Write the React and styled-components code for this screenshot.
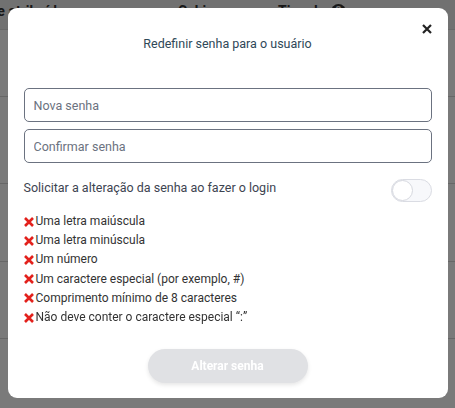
import React from 'react'
import styled, { createGlobalStyle } from 'styled-components'

const GlobalStyle = createGlobalStyle`
  * { box-sizing: border-box; }
  html, body { margin: 0; padding: 0; }
  body {
    font-family: Roboto, "Liberation Sans", sans-serif;
    background: #ffffff;
    width: 455px;
    height: 408px;
    overflow: hidden;
  }
`

const Page = styled.div`
  width: 455px;
  height: 408px;
  background: #ffffff;
`

const TableHead = styled.div`
  height: 30px;
  background: #ececec;
  display: flex;
  align-items: flex-start;
  padding-top: 2px;
  border-bottom: 1px solid #dcdcdc;
  font-size: 14px;
  line-height: 18px;
  font-weight: 700;
  color: #333;
  white-space: nowrap;
  overflow: hidden;
`

const HeadCell = styled.div`
  width: ${p => p.$w}px;
  flex-shrink: 0;
  display: flex;
  align-items: center;
  gap: 6px;
  margin-left: ${p => p.$ml || 0}px;
`

const SortMark = styled.span`
  font-size: 9px;
`

const HelpMark = styled.span`
  width: 15px;
  height: 15px;
  border-radius: 50%;
  background: #333;
  color: #ececec;
  font-size: 11px;
  display: inline-flex;
  align-items: center;
  justify-content: center;
`

const TableRow = styled.div`
  height: ${p => p.$h}px;
  border-bottom: 1px solid #d8d8d8;
`

const Overlay = styled.div`
  position: fixed;
  inset: 0;
  background: rgba(0, 0, 0, 0.52);
  display: flex;
  align-items: flex-start;
  justify-content: center;
  padding-top: 8px;
`

const Modal = styled.div`
  position: relative;
  width: 440px;
  height: 390px;
  background: #ffffff;
  border-radius: 9px;
  padding: 0 16px;
  display: flex;
  flex-direction: column;
`

const CloseButton = styled.button`
  position: absolute;
  top: 11px;
  right: 11px;
  width: 20px;
  height: 20px;
  border: none;
  background: none;
  padding: 0;
  display: flex;
  align-items: center;
  justify-content: center;
  cursor: pointer;
`

const Title = styled.h2`
  margin: 28px 0 0;
  font-size: 12.5px;
  line-height: 16px;
  font-weight: 400;
  color: #2f4858;
  text-align: center;
`

const Fields = styled.div`
  margin-top: 36px;
  display: flex;
  flex-direction: column;
  gap: 7px;
`

const Input = styled.input`
  width: 100%;
  height: 34px;
  border: 1px solid #6b7280;
  border-radius: 5px;
  padding: 0 9px;
  font-family: Roboto, "Liberation Sans", sans-serif;
  font-size: 12.5px;
  color: #333;
  outline: none;
  &::placeholder { color: #6b7280; }
`

const ToggleRow = styled.div`
  margin-top: 16px;
  display: flex;
  justify-content: space-between;
  align-items: flex-start;
`

const ToggleLabel = styled.span`
  font-size: 12.5px;
  line-height: 18px;
  color: #3d4451;
`

const Switch = styled.div`
  width: 41px;
  height: 23px;
  border-radius: 12px;
  border: 1px solid #dadce3;
  background: #f7f8fb;
  padding: 1px;
  display: flex;
`

const Knob = styled.div`
  width: 21px;
  height: 21px;
  margin: -1px;
  border-radius: 50%;
  background: #ffffff;
  border: 1px solid #d6d8df;
`

const Rules = styled.ul`
  list-style: none;
  margin: 10px 0 0;
  padding: 0;
`

const Rule = styled.li`
  display: flex;
  align-items: center;
  gap: 2px;
  font-size: 12px;
  line-height: 19.2px;
  color: #333333;
`

const Footer = styled.div`
  margin-top: auto;
  padding-bottom: 15px;
  display: flex;
  justify-content: center;
`

const SubmitButton = styled.button`
  width: 160px;
  height: 34px;
  border: none;
  border-radius: 17px;
  background: #e0e1e4;
  color: #ffffff;
  font-family: Roboto, "Liberation Sans", sans-serif;
  font-size: 12px;
  font-weight: 700;
  box-shadow: 0 2px 4px rgba(0, 0, 0, 0.1);
`

const Cross = ({ size = 10, color = '#e3211c', w = 2.6 }) => (
  <svg width={size} height={size} viewBox="0 0 10 10">
    <path d="M1 1 L9 9 M9 1 L1 9" stroke={color} strokeWidth={w} strokeLinecap="butt" />
  </svg>
)

const rules = [
  'Uma letra maiúscula',
  'Uma letra minúscula',
  'Um número',
  'Um caractere especial (por exemplo, #)',
  'Comprimento mínimo de 8 caracteres',
  'Não deve conter o caractere especial “:”',
]

const App = () => {
  return (
    <>
      <GlobalStyle />
      <Page>
        <TableHead>
          <HeadCell $w={170} $ml={-72}>Propriedade atribuída <SortMark>▲</SortMark></HeadCell>
          <HeadCell $w={100} $ml={80}>Cabin <SortMark>▲</SortMark></HeadCell>
          <HeadCell $w={80}>Tipo de <HelpMark>?</HelpMark></HeadCell>
        </TableHead>
        <TableRow $h={67} />
        <TableRow $h={87} />
        <TableRow $h={78} />
        <TableRow $h={77} />

        <Overlay>
          <Modal>
            <CloseButton aria-label="Fechar">
              <Cross size={10} color="#222" w={2.2} />
            </CloseButton>
            <Title>Redefinir senha para o usuário</Title>
            <Fields>
              <Input type="password" placeholder="Nova senha" />
              <Input type="password" placeholder="Confirmar senha" />
            </Fields>
            <ToggleRow>
              <ToggleLabel>Solicitar a alteração da senha ao fazer o login</ToggleLabel>
              <Switch>
                <Knob />
              </Switch>
            </ToggleRow>
            <Rules>
              {rules.map(r => (
                <Rule key={r}>
                  <Cross />
                  {r}
                </Rule>
              ))}
            </Rules>
            <Footer>
              <SubmitButton disabled>Alterar senha</SubmitButton>
            </Footer>
          </Modal>
        </Overlay>
      </Page>
    </>
  )
}

export default App
